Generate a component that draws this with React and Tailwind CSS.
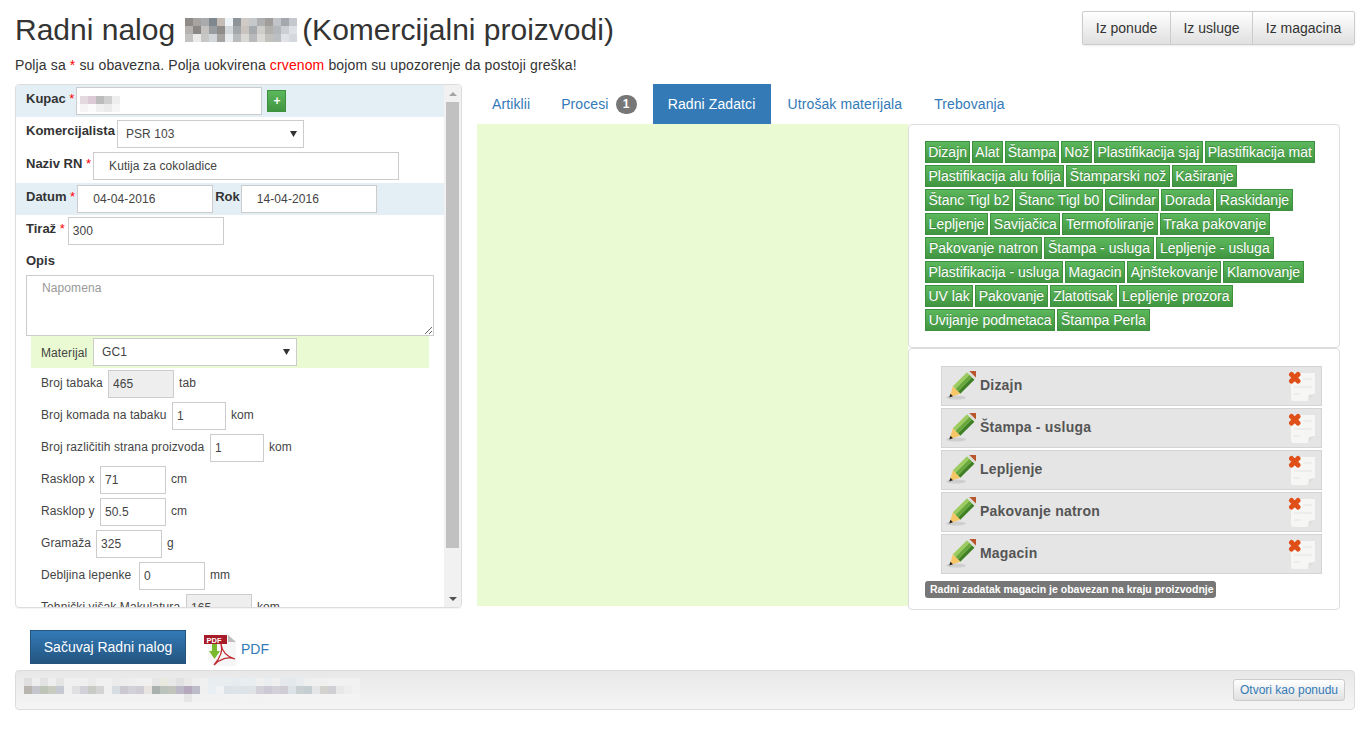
import React from "react";

const FONT = '"Liberation Sans", Arial, sans-serif';

const TITLE_MOSAIC = [
  ["#8f8b88","#a6a3a1","#a9abad","#80888f","#c5bcb6","#eef5f9","#8f9498","#d0cac6","#c6c9cc","#adafb1","#a09d9a","#c0c4c8","#a4a8ac","#c5c9ce"],
  ["#b5b2b0","#8a8785","#c4c2c0","#9a9da0","#8e8c8a","#d4d8db","#a5a8aa","#c8c3bf","#a8abae","#cfcdc9","#b3b1ae","#b5b8bb","#cbced2","#dfe1e4"],
  ["#c4c3c2","#ecebea","#c7c7c5","#d2d5d9","#a5a4a2","#e8ecef","#b9babb","#dad8d5","#b7b9ba","#dcdad7","#c2c1be","#bcbfc2","#e0e2e5","#d5d8dc"],
];
const KUPAC_MOSAIC = [
  ["#e4d9de","#dccbd6","#bcbcbc","#cfcfcf","#eeeeee"],
  ["#f7f4f5","#fbfbfb","#f0f0f0","#ebebeb","#f6f6f6"],
];
const FOOT = [
  ["#dfdfdf","#eeeeee","#e2e2e2","#eeeeee","#e4e4e4","#f0f0f0","#f0f0f0","#f0f0f0","#eaeaea","#f0f0f0","#f0f0f0","#ebebeb","#ededed","#eeeeee","#f0f0f0","#f0f0f0","#e6e6e6","#e9e9e0","#e8e8e8","#e1e1e1","#ebe8ea","#eeeeee","#f0f0f0","#e8edf0","#e9edf0","#e8edf0","#e5ebef","#ebeef0","#e8edf0","#f0f0f0","#ebeef0","#f0f0f0","#e6e9eb","#e4e8ea","#e8ecee","#eef0f0","#f0f0f0","#f0f0f0","#f1f1f1","#f1f1f1","#f1f1f1","#f1f1f1"],
  ["#b8b4ae","#c5c5cc","#bfc4b8","#c8cbc0","#c6c8d2","#f0f0f0","#e0e0e2","#d2d0d8","#c8cac6","#d4d4d4","#f0f0f0","#d8dde2","#ccc8d2","#d2d0d8","#d0ccd4","#e8e4e2","#aab0ae","#bcc2bc","#c0c4bc","#bdb8c8","#b5a8bc","#bcbcca","#f0f0f0","#e8eef2","#f0f2f3","#dbe3e8","#dce4e8","#dde3e6","#e0e4e6","#d4d0d8","#ccc8d4","#d4d0d8","#d0ccd4","#dce2e6","#c8d0d2","#c4ced0","#e4e6e8","#d4d2ce","#d0d0d4","#e8e8e8","#eeeeee","#f1f1f1"],
  ["#f1f1f1","#f1f1f1","#f1f1f1","#f1f1f1","#f1f1f1","#f1f1f1","#f1f1f1","#f1f1f1","#f1f1f1","#f1f1f1","#f1f1f1","#f1f1f1","#f1f1f1","#f1f1f1","#f1f1f1","#f1f1f1","#f1f1f1","#f1f1f1","#f1f1f1","#f1f1f1","#e6e6e6","#f1f1f1","#f1f1f1","#f1f1f1","#f1f1f1","#f2f2f2","#f2f2f2","#f3f3f3","#f2f2f2","#f2f2f2","#f3f3f3","#f3f3f3","#f3f3f3","#f3f3f3","#f3f3f3","#f3f3f3","#f3f3f3","#f3f3f3","#f3f3f3","#f3f3f3","#f3f3f3","#f3f3f3"],
];

function Mosaic({ rows, size = 8, className = "" }) {
  return (
    <div className={`flex flex-col ${className}`}>
      {rows.map((r, i) => (
        <div key={i} className="flex">
          {r.map((c, j) => (
            <div key={j} style={{ width: size, height: size, background: c }} />
          ))}
        </div>
      ))}
    </div>
  );
}

function Star() {
  return <span className="text-[#ff0000] font-normal"> *</span>;
}

function Input({ w, value, pl = "pl-[4px]", disabled, className = "" }) {
  return (
    <input
      readOnly
      defaultValue={value}
      className={`h-[28px] border border-[#cccccc] text-[12px] tracking-[0.1px] text-[#444444] outline-none ${pl} ${w} ${disabled ? "bg-[#eeeeee]" : "bg-white"} ${className}`}
    />
  );
}

function Select({ w, value }) {
  return (
    <div className={`relative h-[28px] ${w}`}>
      <select className="appearance-none h-[28px] w-full border border-[#cccccc] bg-white text-[12px] tracking-[0.1px] text-[#444444] pl-[8px] outline-none rounded-none">
        <option>{value}</option>
      </select>
      <svg className="absolute right-[7px] top-[11px]" width="7" height="6" viewBox="0 0 7 6">
        <path d="M0 0H7L3.500 6Z" fill="#333333" />
      </svg>
    </div>
  );
}

function SubRow({ label, lw, w, value, unit, disabled }) {
  return (
    <div className="flex h-[32px] items-start pl-[25px] shrink-0">
      <span className={`text-[12px] tracking-[0.1px] text-[#444444] leading-[16px] mt-[5px] whitespace-nowrap ${lw}`}>{label}</span>
      <Input w={w} value={value} disabled={disabled} />
      <span className="text-[12px] tracking-[0.1px] text-[#444444] leading-[16px] mt-[5px] ml-[5px]">{unit}</span>
    </div>
  );
}

function Label({ children, className = "" }) {
  return <span className={`text-[13px] font-bold text-[#333333] leading-[20px] whitespace-nowrap ${className}`}>{children}</span>;
}

function Pencil() {
  return (
    <svg width="30" height="30" viewBox="0 0 30 30" className="shrink-0">
      <ellipse cx="10" cy="26.500" rx="10" ry="2" fill="#cfcfcf" />
      <g transform="rotate(45 15 15)">
        <rect x="9.500" y="1" width="3.600" height="20" fill="#9ccb5f" />
        <rect x="13.100" y="1" width="3.600" height="20" fill="#68a83a" />
        <rect x="16.700" y="1" width="3.300" height="20" fill="#3f8024" />
        <rect x="9.500" y="-2" width="10.500" height="3" fill="#dcdfd8" />
        <rect x="9.500" y="-6" width="10.500" height="4.500" rx="1.500" fill="#b9562b" />
        <path d="M9.500 21H20L14.800 31Z" fill="#f6c667" />
        <path d="M13 28L16.600 28L14.800 31.500Z" fill="#222222" />
      </g>
    </svg>
  );
}

function Del() {
  return (
    <svg width="28" height="32" viewBox="0 0 28 32" className="absolute right-[5px] top-[4px]">
      <path d="M3 2H27V23L20 30H5Q3 30 3 28Z" fill="#f6f6f4" />
      <path d="M20 30L21 24L27 23Z" fill="#dededc" />
      <path d="M15 8H24M6 16H24M6 23H12" stroke="#e4e4e2" strokeWidth="1" />
      <path d="M3.500 3.500L10 10M10 3.500L3.500 10" stroke="#df4f17" strokeWidth="5" strokeLinecap="round" />
    </svg>
  );
}

function PdfIcon() {
  return (
    <svg width="32" height="33" viewBox="0 0 32 33" className="shrink-0">
      <path d="M4 1H25L32 8V32H10L4 26Z" fill="#f6f6f6" />
      <path d="M24 1L32 8H24Z" fill="#bdbdbd" />
      <path d="M10 31C16 24 19 16 17 10C18 18 24 23 31 25C24 22 16 25 10 31Z" fill="none" stroke="#c02a32" strokeWidth="1.300" />
      <rect x="0" y="1" width="23" height="9" fill="#a61c28" />
      <text x="2.500" y="8.500" fontSize="7.500" fontWeight="700" fill="#ffffff" fontFamily={FONT}>PDF</text>
      <path d="M8 10H13V17H16L10.500 25L5 17H8Z" fill="#7ab92d" />
    </svg>
  );
}

const TAGS = [
  { pad: "px-[2.150px]", items: ["Dizajn","Alat","Štampa","Nož","Plastifikacija sjaj","Plastifikacija mat"] },
  { pad: "px-[2.500px]", items: ["Plastifikacija alu folija","Štamparski nož","Kaširanje"] },
  { pad: "px-[2.500px]", items: ["Štanc Tigl b2","Štanc Tigl b0","Cilindar","Dorada","Raskidanje"] },
  { pad: "px-[2.600px]", items: ["Lepljenje","Savijačica","Termofoliranje","Traka pakovanje"] },
  { pad: "px-[3px]", items: ["Pakovanje natron","Štampa - usluga","Lepljenje - usluga"] },
  { pad: "px-[2.600px]", items: ["Plastifikacija - usluga","Magacin","Ajnštekovanje","Klamovanje"] },
  { pad: "px-[2.500px]", items: ["UV lak","Pakovanje","Zlatotisak","Lepljenje prozora"] },
  { pad: "px-[2.700px]", items: ["Uvijanje podmetaca","Štampa Perla"] },
];

const TASKS = ["Dizajn", "Štampa - usluga", "Lepljenje", "Pakovanje natron", "Magacin"];

function Tab({ children, active, className = "" }) {
  return (
    <div className={`h-[40px] flex items-center text-[14px] tracking-[0.1px] whitespace-nowrap ${active ? "bg-[#337ab7] text-white w-[118px] justify-center" : "text-[#337ab7] px-[15px]"} ${className}`}>
      {children}
    </div>
  );
}

export default function App() {
  return (
    <div className="min-h-[734px] bg-white text-[#333333] pl-[15px] pr-[17px] pb-[24px]" style={{ fontFamily: FONT }}>
      <div className="flex justify-between items-start">
        <h1 className="flex items-center text-[30px] leading-[33px] font-normal pt-[13px]">
          Radni nalog
          <Mosaic rows={TITLE_MOSAIC} className="ml-[10px] mr-[5px]" />
          (Komercijalni proizvodi)
        </h1>
        <div className="flex mt-[11px] h-[34px] border border-[#cccccc] rounded-[2px] shadow-[0_1px_2px_rgba(0,0,0,0.075)] text-[14px] bg-gradient-to-b from-white to-[#e0e0e0]">
          <div className="w-[88px] flex items-center justify-center border-r border-[#cccccc]">Iz ponude</div>
          <div className="w-[82px] flex items-center justify-center border-r border-[#cccccc]">Iz usluge</div>
          <div className="w-[101px] flex items-center justify-center">Iz magacina</div>
        </div>
      </div>

      <p className="text-[14px] tracking-[0.125px] leading-[20px] mt-[9px]">
        Polja sa <span className="text-[#ff0000]">*</span> su obavezna. Polja uokvirena <span className="text-[#ff0000]">crvenom</span> bojom su upozorenje da postoji greška!
      </p>

      <div className="flex items-start mt-[9px]">
        {/* left panel */}
        <div className="w-[447px] h-[524px] border border-[#dddddd] rounded-[4px] flex overflow-hidden shadow-[0_1px_1px_rgba(0,0,0,0.05)] shrink-0">
          <div className="flex-1 min-w-0 overflow-hidden flex flex-col">
            <div className="h-[32px] bg-[#e4eff5] flex items-start pl-[10px] pt-[2px] shrink-0">
              <Label className="mt-[2px]">Kupac<Star /></Label>
              <div className="relative ml-[2px] w-[186px] h-[28px] border border-[#cccccc] bg-white">
                <Mosaic rows={KUPAC_MOSAIC} className="absolute left-[3px] top-[8px]" />
              </div>
              <button className="ml-[5px] mt-[3px] w-[19px] h-[22px] bg-gradient-to-b from-[#5cb85c] to-[#419641] border border-[#3e8f3e] text-white text-[12px] font-bold leading-none flex items-center justify-center">+</button>
            </div>
            <div className="h-[33px] flex items-start pl-[10px] pt-[3px] shrink-0">
              <Label className="mt-[1px]">Komercijalista</Label>
              <Select w="w-[187px] ml-[2px]" value="PSR 103" />
            </div>
            <div className="h-[33px] flex items-start pl-[10px] pt-[2px] shrink-0">
              <Label className="mt-[2px]">Naziv RN<Star /></Label>
              <Input w="w-[306px] ml-[2px]" value="Kutija za cokoladice" pl="pl-[15px]" />
            </div>
            <div className="h-[32px] bg-[#e4eff5] flex items-start pl-[10px] pt-[2px] shrink-0">
              <Label className="mt-[2px]">Datum<Star /></Label>
              <Input w="w-[136px] ml-[2px]" value="04-04-2016" pl="pl-[15px]" />
              <Label className="mt-[2px] ml-[2px]">Rok</Label>
              <Input w="w-[136px] ml-[1px]" value="14-04-2016" pl="pl-[15px]" />
            </div>
            <div className="h-[32px] flex items-start pl-[10px] pt-[2px] shrink-0">
              <Label className="mt-[2px]">Tiraž<Star /></Label>
              <Input w="w-[156px] ml-[3px]" value="300" />
            </div>
            <div className="h-[28px] pl-[10px] pt-[1px] shrink-0"><Label>Opis</Label></div>
            <div className="pl-[10px] h-[63px] shrink-0">
              <textarea
                readOnly
                placeholder="Napomena"
                className="block w-[408px] h-[61px] border border-[#cccccc] text-[12px] tracking-[0.1px] text-[#444444] pl-[15px] pt-[3px] outline-none placeholder:text-[#999999]"
              />
            </div>
            <div className="ml-[15px] w-[398px] h-[32px] bg-[#eafad2] flex items-start pl-[10px] pt-[2px] -mt-[2px] shrink-0">
              <span className="text-[12px] tracking-[0.1px] text-[#444444] mt-[7px] leading-[16px] w-[52px]">Materijal</span>
              <Select w="w-[204px]" value="GC1" />
            </div>
            <div className="h-[2px] shrink-0" />
            <SubRow label="Broj tabaka" lw="w-[67px]" w="w-[66px]" value="465" unit="tab" disabled />
            <SubRow label="Broj komada na tabaku" lw="w-[131px]" w="w-[54px]" value="1" unit="kom" />
            <SubRow label="Broj različitih strana proizvoda" lw="w-[169px]" w="w-[54px]" value="1" unit="kom" />
            <SubRow label="Rasklop x" lw="w-[59px]" w="w-[66px]" value="71" unit="cm" />
            <SubRow label="Rasklop y" lw="w-[59px]" w="w-[66px]" value="50.5" unit="cm" />
            <SubRow label="Gramaža" lw="w-[55px]" w="w-[66px]" value="325" unit="g" />
            <SubRow label="Debljina lepenke" lw="w-[98px]" w="w-[66px]" value="0" unit="mm" />
            <SubRow label="Tehnički višak Makulatura" lw="w-[145px]" w="w-[66px]" value="165" unit="kom" disabled />
          </div>
          {/* scrollbar */}
          <div className="w-[17px] bg-[#f1f1f1] flex flex-col items-center shrink-0">
            <div className="h-[17px] flex items-center justify-center shrink-0">
              <svg width="8" height="4" viewBox="0 0 8 4"><path d="M0 4L4 0L8 4Z" fill="#a3a3a3" /></svg>
            </div>
            <div className="w-[13px] h-[446px] bg-[#c1c1c1] shrink-0" />
            <div className="flex-1" />
            <div className="h-[17px] flex items-center justify-center shrink-0">
              <svg width="8" height="4" viewBox="0 0 8 4"><path d="M0 0L8 0L4 4Z" fill="#505050" /></svg>
            </div>
          </div>
        </div>

        {/* right side */}
        <div className="ml-[15px] flex-1 min-w-0">
          <div className="flex">
            <Tab>Artiklii</Tab>
            <Tab className="ml-[1px]">
              Procesi
              <span className="ml-[7px] w-[21px] h-[19px] rounded-[10px] bg-[#777777] text-white text-[12px] font-bold flex items-center justify-center">1</span>
            </Tab>
            <Tab active className="ml-[1px]">Radni Zadatci</Tab>
            <Tab className="ml-[2px]">Utrošak materijala</Tab>
            <Tab className="ml-[2px]">Trebovanja</Tab>
          </div>
          <div className="flex items-start">
            <div className="w-[431px] h-[482px] bg-[#eafad2] shrink-0" />
            <div className="w-[432px] shrink-0">
              <div className="h-[224px] border border-[#dddddd] rounded-[4px] bg-white pl-[16px] pt-[16px] flex flex-col gap-[2px]">
                {TAGS.map((row, i) => (
                  <div key={i} className="flex gap-[2px]">
                    {row.items.map((t) => (
                      <span
                        key={t}
                        className={`h-[22px] ${row.pad} border border-[#3e8f3e] bg-gradient-to-b from-[#5cb85c] to-[#419641] text-white text-[14px] leading-[20px] whitespace-nowrap [text-shadow:0_-1px_0_rgba(0,0,0,0.2)]`}
                      >
                        {t}
                      </span>
                    ))}
                  </div>
                ))}
              </div>
              <div className="h-[262px] border border-[#dddddd] rounded-[4px] bg-white pl-[16px] pt-[17px]">
                <div className="flex flex-col gap-[2px] ml-[16px] w-[381px]">
                  {TASKS.map((t) => (
                    <div key={t} className="relative h-[40px] bg-[#e5e5e5] border border-[#d4d4d4] flex items-center pl-[4px]">
                      <Pencil />
                      <span className="ml-[4px] mb-[2px] text-[14px] font-bold text-[#555555] tracking-[0.2px] whitespace-nowrap">{t}</span>
                      <Del />
                    </div>
                  ))}
                </div>
                <div className="mt-[7px] w-[291px] h-[17px] bg-[#777777] rounded-[3px] text-white text-[10.500px] font-bold leading-[17px] pl-[5px] whitespace-nowrap">
                  Radni zadatak magacin je obavezan na kraju proizvodnje
                </div>
              </div>
            </div>
          </div>
        </div>
      </div>

      <div className="flex items-start mt-[20px] pl-[15px] h-[40px]">
        <button className="w-[156px] h-[34px] pt-[1px] bg-gradient-to-b from-[#337ab7] to-[#245580] border border-[#245580] text-white text-[14px]">Sačuvaj Radni nalog</button>
        <div className="ml-[18px] mt-[4px]"><PdfIcon /></div>
        <span className="ml-[5px] mt-[9px] text-[14px] leading-[20px] text-[#337ab7]">PDF</span>
      </div>

      <div className="h-[40px] border border-[#dcdcdc] rounded-[4px] bg-gradient-to-b from-[#e8e8e8] to-[#f5f5f5] flex items-center justify-between pl-[8px] pr-[9px]">
        <Mosaic rows={FOOT} />
        <div className="w-[112px] h-[22px] border border-[#cccccc] rounded-[3px] bg-gradient-to-b from-white to-[#e0e0e0] text-[#337ab7] text-[12px] flex items-center justify-center">Otvori kao ponudu</div>
      </div>
    </div>
  );
}
